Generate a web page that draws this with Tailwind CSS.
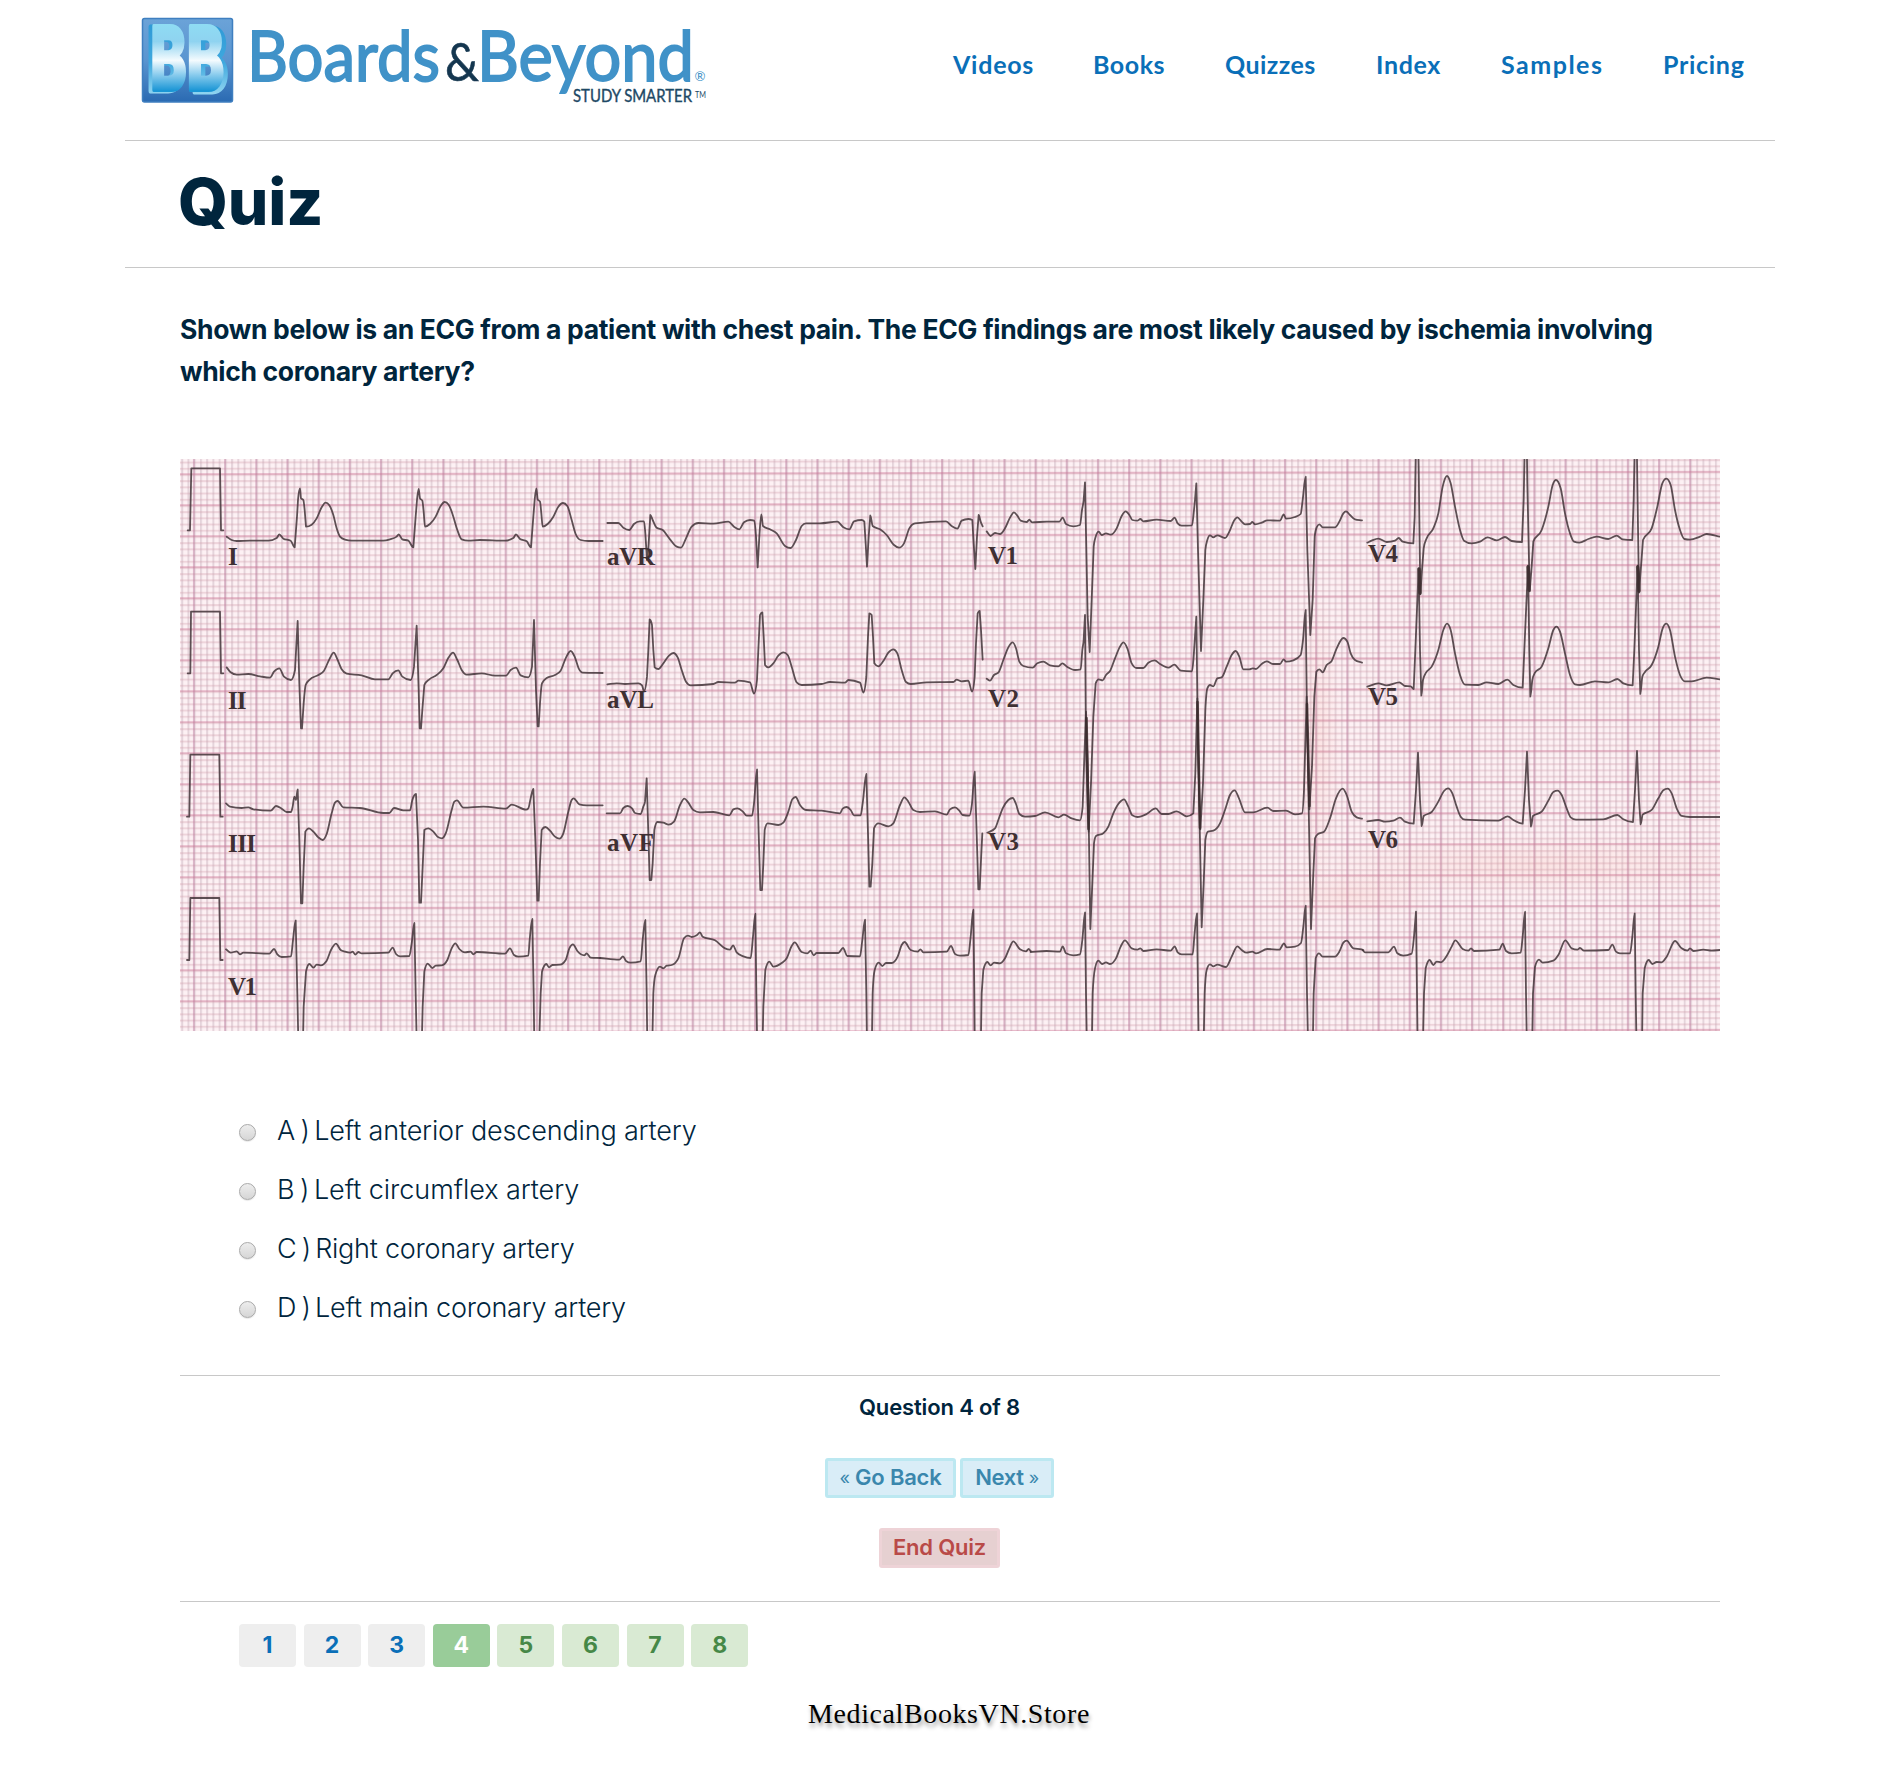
<!DOCTYPE html>
<html lang="en">
<head>
<meta charset="utf-8">
<title>Quiz - Boards &amp; Beyond</title>
<script src="https://cdn.jsdelivr.net/npm/@tailwindcss/browser@4"></script>
</head>
<body class="bg-white font-['Inter',sans-serif] text-[#00253d]">
<div class="ml-[125px] w-[1650px]">
  <header class="flex h-[141px] items-start justify-between border-b border-[#c8c8c8] pr-[30px] pl-[15px]">
    <svg class="mt-3 block" width="580" height="100" viewBox="140 12 580 100" role="img" aria-label="Boards and Beyond">
      <defs>
        <linearGradient id="tile" x1="0" y1="0" x2="0" y2="1"><stop offset="0" stop-color="#6ba3d8"/><stop offset=".5" stop-color="#5a95d0"/><stop offset="1" stop-color="#2a6ab2"/></linearGradient>
        <linearGradient id="face" gradientUnits="userSpaceOnUse" x1="0" y1="24" x2="0" y2="94"><stop offset="0" stop-color="#8fdcf3"/><stop offset=".25" stop-color="#8fd3f0"/><stop offset=".52" stop-color="#f4fbfe"/><stop offset=".72" stop-color="#8ccdee"/><stop offset=".95" stop-color="#1b96d5"/></linearGradient>
        <linearGradient id="side" gradientUnits="userSpaceOnUse" x1="0" y1="24" x2="0" y2="94"><stop offset="0" stop-color="#2f9ad6"/><stop offset=".55" stop-color="#3fa8de"/><stop offset="1" stop-color="#8fd4f0"/></linearGradient>
      </defs>
      <rect x="142.5" y="18.500" width="90" height="83.500" rx="2" fill="url(#tile)" stroke="#3f7fc0" stroke-width="1.500"/>
      <g font-family="Inter" font-weight="800" font-size="88" stroke-linejoin="round">
        <g fill="url(#side)" stroke="url(#side)" stroke-width="5">
          <text x="147" y="91" textLength="37" lengthAdjust="spacingAndGlyphs">B</text>
          <text x="191" y="92" textLength="37" lengthAdjust="spacingAndGlyphs">B</text>
        </g>
        <g fill="url(#face)" stroke="url(#face)" stroke-width="4">
          <text x="150.500" y="89.500" textLength="36" lengthAdjust="spacingAndGlyphs">B</text>
          <text x="187" y="90" textLength="37" lengthAdjust="spacingAndGlyphs">B</text>
        </g>
      </g>
      <g font-family="Lato" fill="#4092c8">
        <g font-size="69" stroke="#4092c8" stroke-width="1.800">
          <text x="247" y="80.500" textLength="193" lengthAdjust="spacingAndGlyphs">Boards</text>
          <text x="477" y="80.500" textLength="217" lengthAdjust="spacingAndGlyphs">Beyond</text>
        </g>
        <text x="445" y="80.500" font-size="53" fill="#14364f" stroke="#14364f" stroke-width=".6" textLength="34" lengthAdjust="spacingAndGlyphs">&amp;</text>
        <text x="694.500" y="81" font-size="13" textLength="11" lengthAdjust="spacingAndGlyphs">®</text>
        <g fill="#1d4865">
          <text x="573" y="102" font-size="18" stroke="#1d4865" stroke-width=".4" textLength="119" lengthAdjust="spacingAndGlyphs">STUDY SMARTER</text>
          <text x="695" y="98" font-size="9.500" textLength="11" lengthAdjust="spacingAndGlyphs">TM</text>
        </g>
      </g>
    </svg>
    <nav class="mt-[49px] flex gap-[59px] font-['Lato',sans-serif] text-[25px] leading-[30px] font-bold text-[#0a6fb8]">
      <a class="w-[81px] whitespace-nowrap tracking-[0.75px]">Videos</a>
      <a class="w-[73px] whitespace-nowrap tracking-[0.55px]">Books</a>
      <a class="w-[92px] whitespace-nowrap tracking-[0.45px]">Quizzes</a>
      <a class="w-[66px] whitespace-nowrap tracking-[0.65px]">Index</a>
      <a class="w-[103px] whitespace-nowrap tracking-[1.5px]">Samples</a>
      <a class="w-[82px] whitespace-nowrap tracking-[0.7px]">Pricing</a>
    </nav>
  </header>

  <div class="flex h-[127px] items-center border-b border-[#c8c8c8] pl-[53px]">
    <h1 class="mb-[5px] text-[64px] leading-none font-extrabold tracking-[-0.2px]">Quiz</h1>
  </div>

  <main class="ml-[55px] w-[1540px] pt-10">
    <p class="text-[26.500px] leading-[42px] font-bold tracking-[-0.335px]"><span class="whitespace-nowrap">Shown below is an ECG from a patient with chest pain. The ECG findings are most likely caused by ischemia involving</span><br>which coronary artery?</p>

    <svg id="ecg" class="mt-[67px] block" width="1540" height="572" viewBox="180 459 1540 572" role="img" aria-label="12-lead ECG">
      <defs>
        <pattern id="minor" patternUnits="userSpaceOnUse" x="193.7" y="474" width="6.2344" height="6.2">
          <rect width="2" height="6.200" x="0" fill="#b296a6" fill-opacity=".33"/>
          <rect width="6.2344" height="2" y="0" fill="#cf96a8" fill-opacity=".33"/>
        </pattern>
        <pattern id="major" patternUnits="userSpaceOnUse" x="192.900" y="473.200" width="31.172" height="31">
          <rect width="1.800" height="31" fill="#b9789a" fill-opacity=".46"/>
          <rect width="31.172" height="1.800" fill="#cc7596" fill-opacity=".42"/>
        </pattern>
        <radialGradient id="stain"><stop offset="0" stop-color="#f08a78" stop-opacity=".13"/><stop offset="1" stop-color="#f08a78" stop-opacity="0"/></radialGradient>
      </defs>
      <rect x="180" y="459" width="1540" height="572" fill="#fdf1f4"/>
      <g transform="translate(180 459) skewY(-.09) translate(-180 -459)">
        <rect x="180" y="450" width="1540" height="600" fill="url(#minor)"/>
        <rect x="180" y="450" width="1540" height="600" fill="url(#major)"/>
      </g>
      <ellipse cx="1540" cy="865" rx="260" ry="32" fill="url(#stain)"/>
      <ellipse cx="1350" cy="895" rx="90" ry="24" fill="url(#stain)"/>
      <ellipse cx="1318" cy="740" rx="24" ry="150" fill="url(#stain)"/>
      <g id="traces" fill="none" stroke="#43363a" stroke-opacity=".86" stroke-width="5.400" stroke-linejoin="round" stroke-linecap="round"></g>
      <g fill="none" stroke="#3a2a2c" stroke-opacity=".8" stroke-linecap="round" stroke-width="2.600">
        <path d="M1086.500 718L1088.500 829M1197.500 702L1200 828M1307 704L1309.500 806" />
        <path d="M1419 569L1420 593M1528 567L1529 590M1637.700 567L1639 591" stroke-width="3.600"/>
      </g>
      <g fill="#3f3033" font-family="Liberation Serif" font-weight="700" font-size="25">
        <text x="228" y="565">I</text>
        <text x="228" y="708.500" textLength="18.500">II</text>
        <text x="228" y="851.500" textLength="28">III</text>
        <text x="228" y="994.500" textLength="29">V1</text>
        <text x="607" y="565" textLength="48">aVR</text>
        <text x="607" y="708" textLength="47">aVL</text>
        <text x="607" y="851" textLength="47">aVF</text>
        <text x="988" y="564" textLength="30">V1</text>
        <text x="988" y="707" textLength="31">V2</text>
        <text x="988" y="850" textLength="31">V3</text>
        <text x="1368" y="562" textLength="30">V4</text>
        <text x="1368" y="705" textLength="30">V5</text>
        <text x="1368" y="848" textLength="30">V6</text>
      </g>
    </svg>

    <div class="mt-[71px] flex flex-col pl-[59px] text-[27px] font-light">
      <label class="flex h-[59px] items-center gap-[21px]"><span class="mt-[1px] size-[17px] rounded-full border border-[#a9a9a9] bg-linear-to-b from-[#ededed] to-[#d6d6d6] shadow-[0_1px_1px_#00000018]"></span><span class="tracking-[-0.16px]"><span class="mr-[-3px] [word-spacing:-2px]">A )</span> Left anterior descending artery</span></label>
      <label class="flex h-[59px] items-center gap-[21px]"><span class="mt-[1px] size-[17px] rounded-full border border-[#a9a9a9] bg-linear-to-b from-[#ededed] to-[#d6d6d6] shadow-[0_1px_1px_#00000018]"></span><span class="tracking-[-0.06px]"><span class="mr-[-3px] [word-spacing:-2px]">B )</span> Left circumflex artery</span></label>
      <label class="flex h-[59px] items-center gap-[21px]"><span class="mt-[1px] size-[17px] rounded-full border border-[#a9a9a9] bg-linear-to-b from-[#ededed] to-[#d6d6d6] shadow-[0_1px_1px_#00000018]"></span><span class="tracking-[-0.26px]"><span class="mr-[-3px] [word-spacing:-2px]">C )</span> Right coronary artery</span></label>
      <label class="flex h-[59px] items-center gap-[21px]"><span class="mt-[1px] size-[17px] rounded-full border border-[#a9a9a9] bg-linear-to-b from-[#ededed] to-[#d6d6d6] shadow-[0_1px_1px_#00000018]"></span><span class="tracking-[-0.24px]"><span class="mr-[-3px] [word-spacing:-2px]">D )</span> Left main coronary artery</span></label>
    </div>

    <section class="mt-[37px] flex h-[227px] flex-col items-center border-y border-[#c8c8c8] pt-[15px] pr-[21px] text-[22px] font-semibold">
      <p class="leading-[32px] tracking-[-0.15px]">Question 4 of 8</p>
      <div class="mt-[35px] flex gap-[4px] text-[#3a87ad]">
        <a class="flex h-[40px] w-[131px] items-center justify-center rounded-[3px] border-[3px] border-[#bce8f1] bg-[#d9edf7] pb-[2px] tracking-[-0.2px] whitespace-pre"><span class="text-[18px] font-normal">«</span> Go Back</a>
        <a class="flex h-[40px] w-[94px] items-center justify-center rounded-[3px] border-[3px] border-[#bce8f1] bg-[#d9edf7] pb-[2px] tracking-[-0.4px] whitespace-pre">Next <span class="text-[18px] font-normal">»</span></a>
      </div>
      <a class="mt-[30px] flex h-[40px] w-[121px] items-center justify-center rounded-[3px] border-[3px] border-[#eed3d7] bg-[#e6d0d1] pb-[2px] tracking-[-0.2px] text-[#b94a48]">End Quiz</a>
    </section>

    <div class="mt-[22px] flex gap-[7.6px] pl-[59px] text-[23px] leading-[42px] font-bold text-[#0a6fb8]">
      <a class="h-[43px] w-[57px] rounded-[4px] bg-[#eeeeee] text-center">1</a>
      <a class="h-[43px] w-[57px] rounded-[4px] bg-[#eeeeee] text-center">2</a>
      <a class="h-[43px] w-[57px] rounded-[4px] bg-[#eeeeee] text-center">3</a>
      <a class="h-[43px] w-[57px] rounded-[4px] bg-[#99cc99] text-center text-white">4</a>
      <a class="h-[43px] w-[57px] rounded-[4px] bg-[#d9ead3] text-center text-[#468847]">5</a>
      <a class="h-[43px] w-[57px] rounded-[4px] bg-[#d9ead3] text-center text-[#468847]">6</a>
      <a class="h-[43px] w-[57px] rounded-[4px] bg-[#d9ead3] text-center text-[#468847]">7</a>
      <a class="h-[43px] w-[57px] rounded-[4px] bg-[#d9ead3] text-center text-[#468847]">8</a>
    </div>

    <footer class="mt-[29px] pr-[2px] text-center font-['Liberation_Serif',serif] text-[28px] leading-[36px] tracking-[0.6px] text-black [text-shadow:1px_4px_4px_#00000066]">MedicalBooksVN.Store</footer>
  </main>
</div>

<script>
// Each trace: origin of its tile, followed by x y samples in thirds of a pixel.
const tiles = {A:[170,450],B:[600,450],C:[980,450],D:[1340,450],E:[170,740],F:[600,740],G:[980,740],H:[1340,740]};
const pulses = [
['A','53 241,60 241,64 55,150 55,153 241,160 241'],
['A','53 670,61 670,63 485,150 485,153 670,160 670'],
['E','51 230,58 230,61 44,148 44,151 230,158 230'],
['E','51 660,58 660,61 474,148 474,151 660,158 660']];
const leads = [
['A','170 260,185 270,200 273,240 272,295 272,320 264,328 253,340 266,362 272,374 292,381 200,384 150,390 115,393 145,400 150,404 180,408 230,425 224,440 205,455 172,467 158,478 166,490 195,500 235,510 260,525 269,545 272,640 272,660 268,680 260,686 253,697 268,715 272,730 292,737 200,741 150,746 117,750 145,757 152,761 185,765 230,780 222,797 200,812 168,824 156,836 164,850 200,862 240,875 268,895 272,930 270,1005 272,1030 264,1038 253,1050 267,1070 274,1083 292,1090 200,1094 150,1099 115,1103 148,1110 155,1114 190,1118 230,1133 222,1150 200,1165 170,1179 159,1192 168,1205 210,1217 252,1232 270,1255 273,1298 273'],
['A','170 652,182 667,200 674,235 672,270 679,300 683,312 665,328 655,342 680,363 690,375 660,383 513,388 700,393 835,396 835,401 760,407 705,420 688,445 675,462 662,478 628,491 608,503 630,515 658,530 671,575 676,615 688,655 688,668 670,685 661,697 680,722 690,732 650,740 527,746 720,749 835,753 835,757 780,763 705,778 688,800 675,820 655,836 622,849 608,862 630,875 660,890 674,935 670,975 677,1008 677,1022 660,1038 653,1052 676,1075 682,1086 650,1092 510,1098 720,1103 829,1106 829,1110 760,1116 700,1130 684,1155 675,1172 662,1187 625,1202 603,1214 620,1226 655,1238 668,1298 669'],
['B','22 219,55 219,70 233,88 240,102 222,120 214,132 214,136 250,141 330,146 280,151 195,158 210,170 233,188 240,210 268,230 290,243 293,258 265,275 230,295 219,340 221,385 215,402 230,418 238,432 217,450 210,463 212,468 260,473 352,478 260,484 193,489 228,510 238,530 250,555 288,572 294,588 270,605 228,618 220,660 220,712 215,730 232,748 238,762 214,785 210,793 215,797 280,801 350,806 260,811 196,818 228,840 238,860 255,882 285,897 293,912 280,928 235,945 220,1038 214,1055 228,1072 236,1085 212,1105 207,1117 210,1121 280,1126 357,1131 260,1136 195,1142 215,1148 229'],
['B','22 703,50 700,75 702,115 700,126 706,132 724,141 680,145 600,149 508,156 525,160 600,164 652,175 657,190 640,207 617,220 609,233 622,245 660,258 695,272 706,340 702,355 696,405 698,415 692,450 697,462 731,471 690,475 600,480 495,487 487,491 560,495 645,505 652,520 640,535 617,550 607,563 615,575 650,590 697,605 705,665 702,690 696,735 698,745 690,780 698,790 728,799 680,804 560,808 490,815 495,819 560,823 640,835 649,850 633,865 608,880 598,892 610,905 660,918 696,932 702,980 697,1060 696,1070 689,1085 694,1105 692,1116 725,1124 680,1128 580,1133 490,1139 483,1143 540,1148 629'],
['C','20 244,32 258,45 249,60 252,75 235,90 203,102 187,112 197,122 212,140 216,148 209,156 217,200 215,238 215,248 203,258 222,280 229,300 225,306 180,311 150,315 97,318 250,323 500,329 606,335 450,341 290,347 260,356 245,365 255,378 250,392 254,410 235,425 198,437 184,448 195,457 210,472 212,481 207,490 214,530 209,572 213,584 203,593 220,605 227,636 226,642 180,645 150,649 100,654 300,663 603,670 450,676 300,682 270,690 256,700 262,712 256,735 264,748 245,762 212,772 202,785 215,795 223,810 222,817 216,825 223,845 218,862 211,900 212,911 193,918 206,945 201,962 192,968 150,977 80,982 300,991 555,998 450,1004 260,1010 232,1018 223,1028 232,1065 232,1078 215,1090 190,1098 184,1110 195,1125 208,1146 211'],
['C','20 686,30 692,42 675,55 668,70 630,85 592,98 577,108 595,118 635,130 648,158 653,172 640,190 635,210 646,235 649,247 640,262 651,285 660,302 658,307 600,311 570,315 495,318 900,326 1145,333 1000,340 800,347 700,356 688,368 691,378 675,390 663,405 625,420 590,430 577,442 595,455 640,470 654,490 654,505 638,524 631,540 642,565 653,583 644,603 662,636 664,641 620,645 560,649 500,654 900,661 1138,669 1000,676 780,682 715,690 705,700 709,712 685,725 682,740 650,755 615,767 603,778 620,790 658,808 658,818 655,828 657,845 642,860 634,880 642,900 642,911 628,918 635,940 631,962 615,969 570,977 480,981 800,988 1078,996 950,1003 740,1009 665,1018 658,1028 667,1040 645,1055 633,1070 595,1090 564,1102 575,1112 610,1125 630,1146 638'],
['G','22 278,45 265,55 240,68 205,85 180,98 174,108 192,118 222,135 230,165 228,195 217,235 232,252 224,275 235,300 241,308 200,313 50,318 -85,324 100,331 567,337 430,342 310,348 288,370 280,385 260,400 220,418 188,432 178,445 200,457 226,472 231,500 222,527 205,545 222,565 222,590 214,620 229,640 220,646 100,652 -125,658 200,665 562,671 430,676 300,684 275,700 272,720 250,735 210,750 165,764 151,777 175,795 217,820 217,862 203,880 213,918 212,945 223,966 220,972 150,980 -130,986 200,993 567,1000 400,1005 295,1014 282,1032 275,1050 235,1068 175,1088 146,1100 165,1115 215,1130 232,1146 236'],
['D','82 278,95 272,115 266,140 276,165 272,176 264,188 275,220 280,224 200,231 -200,236 50,241 433,246 360,251 295,260 265,280 235,295 190,308 110,321 78,332 100,345 170,360 240,372 272,395 280,420 275,443 262,470 271,495 261,515 273,546 276,551 150,558 -200,562 100,569 424,575 350,580 275,605 240,625 170,638 105,648 90,662 115,675 190,690 250,702 275,718 278,745 267,770 260,805 267,830 257,848 268,877 270,881 150,888 -200,892 100,897 428,903 350,909 270,935 235,952 170,967 100,979 86,992 105,1005 180,1020 240,1033 267,1050 269,1080 260,1100 252,1140 260'],
['D','82 710,115 700,140 706,178 697,195 708,212 709,221 717,226 600,236 355,240 600,244 737,249 690,258 668,275 650,295 600,310 540,321 521,332 540,345 610,360 675,375 704,415 705,440 697,475 702,502 689,520 705,548 713,553 600,564 347,568 600,571 740,577 690,585 668,605 650,625 595,640 540,649 530,660 545,675 610,690 675,705 703,720 705,765 694,805 697,832 687,850 700,878 706,883 600,893 347,897 600,901 732,907 680,915 666,935 645,955 590,968 535,979 521,990 540,1005 620,1020 675,1035 694,1055 694,1100 683,1140 688'],
['H','82 244,115 240,135 245,160 242,180 233,195 245,221 251,228 150,234 38,240 180,245 258,251 228,275 216,295 185,312 153,324 145,337 160,350 200,362 230,375 239,475 242,503 229,520 240,548 251,555 150,561 35,567 180,573 260,579 228,605 215,625 182,640 156,653 152,665 165,680 205,692 232,708 239,790 238,832 225,850 238,879 246,885 150,891 33,897 180,902 253,908 224,935 210,955 175,970 151,983 146,995 160,1010 205,1025 228,1050 231,1140 231'],
['E','168 190,180 200,215 204,235 202,250 208,302 212,318 198,335 206,350 216,363 216,368 200,373 170,378 180,383 148,388 300,393 490,397 490,401 380,406 275,417 265,430 275,445 292,458 300,470 282,485 220,495 188,503 183,520 202,570 204,640 219,658 219,672 204,700 211,720 211,727 180,738 162,744 300,748 488,753 488,758 380,763 270,775 265,790 275,805 292,816 295,828 278,845 210,853 185,861 181,880 203,940 200,1008 206,1025 194,1068 209,1075 205,1083 170,1090 147,1096 300,1102 482,1106 482,1110 370,1115 270,1126 261,1140 272,1155 290,1168 296,1180 280,1195 215,1205 180,1211 175,1228 193,1250 196,1298 196'],
['F','20 220,60 220,70 204,83 198,96 205,105 219,122 222,130 200,135 185,140 115,145 280,149 420,154 420,158 370,163 270,172 246,190 248,206 254,222 245,240 195,253 176,265 188,280 210,300 217,340 216,388 226,400 208,413 205,428 214,440 227,456 227,462 190,471 88,476 280,481 450,486 450,490 370,494 270,503 250,535 255,550 248,565 215,577 178,587 171,600 195,618 210,665 212,720 220,728 206,740 201,752 210,762 226,782 226,788 190,799 102,804 280,808 440,812 440,817 370,822 265,835 250,865 259,880 250,900 195,913 172,925 185,940 210,960 216,1005 214,1040 224,1050 208,1065 202,1078 212,1088 225,1108 227,1116 190,1124 95,1130 280,1135 448,1139 448,1143 360,1147 280'],
['E','168 628,182 638,200 634,210 643,220 638,298 641,312 627,322 643,335 651,363 649,369 600,377 541,382 760,387 1000,397 1000,401 800,408 695,418 672,430 683,440 674,452 676,470 662,483 630,498 611,512 630,525 635,540 638,548 635,556 644,565 636,575 640,655 638,668 623,678 642,690 649,718 648,725 610,733 549,737 760,742 1000,753 1000,758 800,763 695,773 671,787 684,797 677,815 676,832 660,845 625,856 610,868 627,885 637,902 635,910 643,920 636,1005 641,1020 625,1032 645,1045 650,1075 647,1079 600,1087 537,1091 760,1094 1000,1105 1000,1112 760,1116 695,1129 672,1137 682,1147 675,1170 674,1187 660,1198 625,1209 613,1222 633,1243 646,1250 640,1262 653,1290 654'],
['F','0 654,58 659,69 649,78 663,92 668,122 664,128 600,136 540,140 760,143 1000,155 1000,160 760,166 705,180 680,190 685,200 677,215 675,235 655,252 595,264 587,275 591,290 586,300 577,308 590,345 601,375 625,390 629,399 616,410 637,430 649,452 654,459 590,466 521,469 760,473 1000,486 1000,490 800,496 690,508 665,520 680,545 669,560 655,575 618,584 607,605 636,622 640,632 632,641 646,650 639,715 639,729 624,742 648,780 649,787 600,795 539,799 760,802 1000,814 1000,818 760,824 690,836 668,847 678,858 669,875 669,893 650,905 615,914 606,932 630,953 635,961 628,970 637,1040 635,1053 618,1065 642,1080 647,1105 645,1112 590,1120 509,1123 760,1125 1000,1141 1000,1145 760,1150 690,1162 666,1172 676,1182 668,1200 670,1215 655,1228 625,1240 604,1260 628,1278 634,1286 627,1292 633'],
['G','152 636,200 633,240 635,248 619,258 640,280 646,300 643,307 600,315 517,318 760,322 1000,334 1000,338 760,345 685,355 662,366 672,378 667,390 672,408 655,422 620,435 601,455 625,472 629,481 625,490 633,530 628,572 632,584 619,593 637,605 643,638 643,643 590,651 520,654 760,657 1000,669 1000,674 760,680 690,690 673,700 679,712 674,738 681,755 650,772 619,785 630,800 638,817 635,828 640,862 627,898 629,912 610,920 622,945 620,963 609,970 560,977 497,981 760,986 1000,997 1000,1001 760,1007 655,1017 640,1028 650,1065 650,1078 635,1090 608,1100 602,1120 625,1145 628,1150 631'],
['H','68 630,75 637,145 637,162 620,172 640,190 647,215 641,222 590,228 515,231 760,234 1000,247 1000,252 760,257 685,269 660,280 675,290 665,303 667,320 648,335 620,346 601,368 627,385 632,393 625,402 633,478 629,488 611,498 633,515 640,542 638,548 590,555 515,558 760,562 1000,575 1000,579 760,585 680,597 659,608 668,640 662,655 645,676 601,695 625,712 629,720 624,732 632,805 630,817 614,828 635,840 640,870 640,877 590,884 520,887 760,891 1000,905 1000,908 760,914 685,926 660,937 672,950 666,965 667,980 650,1005 603,1025 625,1042 632,1050 625,1060 633,1090 629,1115 632,1140 630']];
const parse = s => s.split(',').map(p => p.trim().split(' ').map(Number));
// Monotone cubic interpolation, so spikes never overshoot.
function smooth(p) {
  const n = p.length, s = [], t = [];
  for (let i = 0; i < n - 1; i++) s[i] = (p[i+1][1] - p[i][1]) / (p[i+1][0] - p[i][0]);
  t[0] = s[0]; t[n-1] = s[n-2];
  for (let i = 1; i < n - 1; i++) {
    const h0 = p[i][0] - p[i-1][0], h1 = p[i+1][0] - p[i][0];
    const m = (s[i-1] * h1 + s[i] * h0) / (h0 + h1);
    t[i] = s[i-1] * s[i] <= 0 ? 0 : Math.sign(s[i]) * Math.min(Math.abs(s[i-1]), Math.abs(s[i]), Math.abs(m) / 2) * 2;
  }
  let d = 'M' + p[0];
  for (let i = 0; i < n - 1; i++) {
    const a = p[i], b = p[i+1], h = (b[0] - a[0]) / 3;
    if (Math.abs(s[i]) > 12) { d += 'L' + b; continue; }
    d += `C${a[0]+h} ${a[1]+t[i]*h} ${b[0]-h} ${b[1]-t[i+1]*h} ${b}`;
  }
  return d;
}
const g = document.getElementById('traces');
function add([tile, pts], f) {
  const e = document.createElementNS('http://www.w3.org/2000/svg', 'path');
  e.setAttribute('d', f(parse(pts)));
  e.setAttribute('transform', `translate(${tiles[tile]}) scale(.33333)`);
  g.appendChild(e);
}
pulses.forEach(l => add(l, p => 'M' + p.join('L')));
leads.forEach(l => add(l, smooth));
</script>
</body>
</html>
